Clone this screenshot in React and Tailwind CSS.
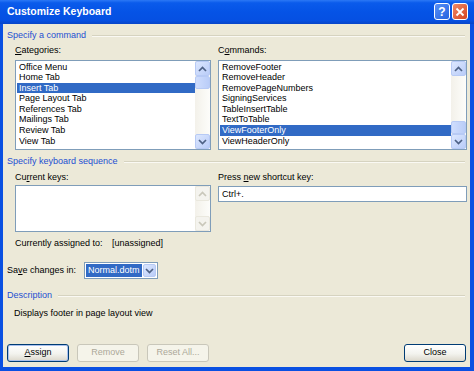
import React from 'react';

const categories = [
  'Office Menu',
  'Home Tab',
  'Insert Tab',
  'Page Layout Tab',
  'References Tab',
  'Mailings Tab',
  'Review Tab',
  'View Tab',
];

const commands = [
  'RemoveFooter',
  'RemoveHeader',
  'RemovePageNumbers',
  'SigningServices',
  'TableInsertTable',
  'TextToTable',
  'ViewFooterOnly',
  'ViewHeaderOnly',
];

function Chevron({ dir, color }) {
  return (
    <svg width="9" height="6" viewBox="0 0 9 6">
      <path
        d={dir === 'up' ? 'M1 5 L4.5 1.5 L8 5' : 'M1 1 L4.5 4.5 L8 1'}
        fill="none"
        stroke={color}
        strokeWidth="1.7"
      />
    </svg>
  );
}

function ScrollArrow({ dir, disabled }) {
  if (disabled) {
    return (
      <div className="h-[15px] w-[15px] rounded-[2px] border border-[#EAE8DE] bg-[#F4F3EE] flex items-center justify-center">
        <Chevron dir={dir} color="#C9C7BA" />
      </div>
    );
  }
  return (
    <div className="h-[15px] w-[15px] rounded-[2px] border border-[#B7CAF5] bg-[linear-gradient(135deg,#DCE7FE,#B9CCF8)] flex items-center justify-center">
      <Chevron dir={dir} color="#4D6185" />
    </div>
  );
}

function Scrollbar({ thumb, disabled }) {
  return (
    <div className="w-[15px] h-full flex flex-col bg-[linear-gradient(to_right,#F3F1EA,#FDFDFA)]">
      <ScrollArrow dir="up" disabled={disabled} />
      <div className={`flex-1 flex flex-col ${thumb === 'bottom' ? 'justify-end' : 'justify-start'}`}>
        {thumb && (
          <div className="h-[13px] w-[15px] rounded-[2px] border border-[#B7CAF5] bg-[linear-gradient(to_right,#CFDDFD,#BACDF8)]" />
        )}
      </div>
      <ScrollArrow dir="down" disabled={disabled} />
    </div>
  );
}

function ListBox({ items, selected, thumb }) {
  return (
    <div className="h-[90px] border border-[#7F9DB9] bg-white flex">
      <div className="flex-1 pl-[1px] pt-[0.5px]">
        {items.map((it) => (
          <div
            key={it}
            className={`h-[10.6px] leading-[10.6px] pl-[2px] whitespace-nowrap ${
              it === selected ? 'bg-[#316AC5] text-white' : ''
            }`}
          >
            {it}
          </div>
        ))}
      </div>
      <Scrollbar thumb={thumb} />
    </div>
  );
}

function GroupHeader({ children, className = '' }) {
  return (
    <div className={`flex items-center h-[11px] leading-[11px] pl-[4px] pr-[5px] ${className}`}>
      <span className="text-[#1D4FD2]">{children}</span>
      <div className="flex-1 ml-[6px] border-t border-[#D6D3C0] border-b border-b-[#FAF9F3]" />
    </div>
  );
}

function XPButton({ children, disabled, focused }) {
  if (disabled) {
    return (
      <div className="w-[62px] h-[18px] rounded-[3px] border border-[#C9C7BA] bg-[#F5F4EA] text-[#ACA899] flex items-center justify-center">
        {children}
      </div>
    );
  }
  return (
    <div
      className={`w-[62px] h-[18px] rounded-[3px] border border-[#003C74] bg-[linear-gradient(to_bottom,#FFFFFF,#F3F3EE_55%,#DCD8CC)] flex items-center justify-center ${
        focused ? 'shadow-[inset_0_0_0_1px_#A9C0EE]' : ''
      }`}
    >
      {children}
    </div>
  );
}

export default function App() {
  return (
    <div className="w-[474px] h-[371px] bg-[#0A50E2] flex flex-col font-['Liberation_Sans',Arial,sans-serif] text-[9px] text-black overflow-hidden">
      {/* title bar */}
      <div className="h-[24px] flex items-center justify-between pl-[7px] pr-[6px] bg-[linear-gradient(to_bottom,#2B78F5_0%,#0A5BEB_12%,#0553E6_50%,#0550E2_85%,#0745C8_100%)]">
        <span className="text-white font-bold text-[10.5px]">Customize Keyboard</span>
        <div className="flex gap-[2px] mt-[-1px]">
          <div className="w-[16px] h-[17px] rounded-[3px] border border-white bg-[linear-gradient(135deg,#5A91F7,#2462DF)] flex items-center justify-center text-white font-bold text-[12px] leading-none">
            ?
          </div>
          <div className="w-[16px] h-[17px] rounded-[3px] border border-white bg-[linear-gradient(135deg,#EE8A69,#D6441F)] flex items-center justify-center">
            <svg width="10" height="10" viewBox="0 0 10 10">
              <path d="M1.5 1.5 L8.5 8.5 M8.5 1.5 L1.5 8.5" stroke="white" strokeWidth="1.8" />
            </svg>
          </div>
        </div>
      </div>

      {/* body */}
      <div className="flex-1 min-h-0 ml-[3px] mr-[4px] mb-[4px] bg-[#ECE9D8] flex flex-col">
        <GroupHeader className="mt-[6px]">Specify a command</GroupHeader>

        <div className="grid grid-cols-[196px_249px] gap-x-[7px] pl-[12px] mt-[4px]">
          <div className="h-[11px] leading-[11px]">
            <span className="underline">C</span>ategories:
          </div>
          <div className="h-[11px] leading-[11px]">
            C<span className="underline">o</span>mmands:
          </div>
          <div className="mt-[4px]">
            <ListBox items={categories} selected="Insert Tab" thumb="top" />
          </div>
          <div className="mt-[4px]">
            <ListBox items={commands} selected="ViewFooterOnly" thumb="bottom" />
          </div>
        </div>

        <GroupHeader className="mt-[6px]">Specify keyboard sequence</GroupHeader>

        <div className="grid grid-cols-[196px_249px] gap-x-[7px] pl-[12px] mt-[5px] items-start">
          <div className="h-[11px] leading-[11px]">
            Cu<span className="underline">r</span>rent keys:
          </div>
          <div className="h-[11px] leading-[11px]">
            Press <span className="underline">n</span>ew shortcut key:
          </div>
          <div className="mt-[2px] h-[47px] border border-[#7F9DB9] bg-white flex">
            <div className="flex-1" />
            <Scrollbar disabled />
          </div>
          <div className="mt-[3px] h-[16px] border border-[#7F9DB9] bg-white pl-[3px] leading-[14px]">
            Ctrl+.
          </div>
        </div>

        <div className="mt-[6px] pl-[12px] h-[11px] leading-[11px] flex">
          <span className="w-[97px]">Currently assigned to:</span>
          <span>[unassigned]</span>
        </div>

        <div className="mt-[13px] pl-[4px] flex items-center h-[17px]">
          <span className="w-[77px]">
            Sa<span className="underline">v</span>e changes in:
          </span>
          <div className="w-[74px] h-[17px] border border-[#7F9DB9] bg-white flex p-[1px]">
            <div className="flex-1 bg-[#316AC5] text-white pl-[2px] leading-[13px]">Normal.dotm</div>
            <div className="ml-[1px] w-[13px] h-[13px] rounded-[2px] border border-[#B7CAF5] bg-[linear-gradient(135deg,#DCE7FE,#B9CCF8)] flex items-center justify-center">
              <Chevron dir="down" color="#4D6185" />
            </div>
          </div>
        </div>

        <GroupHeader className="mt-[11px]">Description</GroupHeader>

        <div className="mt-[7px] pl-[11px] h-[11px] leading-[11px]">Displays footer in page layout view</div>

        <div className="mt-[25px] px-[4px] flex items-center justify-between">
          <div className="flex gap-[8px]">
            <XPButton focused>
              <span>
                <span className="underline">A</span>ssign
              </span>
            </XPButton>
            <XPButton disabled>Remove</XPButton>
            <XPButton disabled>Reset All...</XPButton>
          </div>
          <XPButton>Close</XPButton>
        </div>
      </div>
    </div>
  );
}
